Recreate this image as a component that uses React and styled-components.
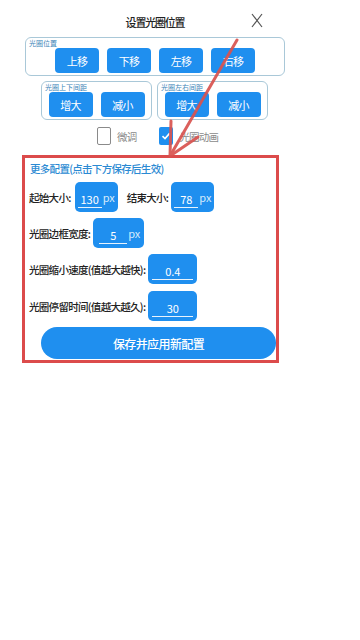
import React from "react";
import styled, { createGlobalStyle } from "styled-components";

const GlobalStyle = createGlobalStyle`
  html, body {
    margin: 0;
    padding: 0;
    background: #ffffff;
    font-family: "Noto Sans CJK SC", "Noto Sans", sans-serif;
  }
`;

const Page = styled.div`
  position: relative;
  width: 360px;
  height: 640px;
  overflow: hidden;
  background: #ffffff;
`;

const Panel = styled.div`
  width: 310px;
  display: flex;
  flex-direction: column;
`;

const Header = styled.div`
  height: 37px;
  display: grid;
  grid-template-columns: 1fr auto 1fr;
  align-items: center;
`;

const Title = styled.div`
  grid-column: 2;
  font-size: 11px;
  letter-spacing: -1.2px;
  color: #222;
  font-weight: 500;
  padding-top: 6px;
`;

const Close = styled.div`
  grid-column: 3;
  margin-left: 67px;
  width: 12px;
  height: 15px;
  margin-top: 3px;
  display: flex;
`;

const Group = styled.div`
  border: 1px solid #a9c8d8;
  border-radius: 6px;
  width: ${(p) => p.w}px;
  box-sizing: border-box;
  display: flex;
  flex-direction: column;
  padding-bottom: 2px;
`;

const GroupLabel = styled.div`
  font-size: 7px;
  line-height: 10px;
  height: 10px;
  color: #3d86b8;
  padding-left: 3px;
`;

const ButtonRow = styled.div`
  display: flex;
  justify-content: center;
  gap: 8px;
`;

const Btn = styled.div`
  width: 44px;
  height: 25px;
  border-radius: 4px;
  background: #1f8fef;
  color: #fff;
  font-size: 11px;
  letter-spacing: -0.8px;
  display: flex;
  align-items: center;
  justify-content: center;
`;

const Row1 = styled.div`
  padding-left: 25px;
`;

const Row2 = styled.div`
  display: flex;
  gap: 5px;
  padding-left: 41px;
  margin-top: 5px;
`;

const CheckRow = styled.div`
  display: flex;
  align-items: center;
  height: 18px;
  margin-top: 7px;
  padding-left: 97px;
`;

const CheckItem = styled.div`
  display: flex;
  align-items: center;
  gap: 6px;
  margin-right: ${(p) => p.mr || 0}px;
`;

const Box = styled.div`
  width: 14px;
  height: 18px;
  flex-shrink: 0;
  box-sizing: border-box;
  border-radius: 2px;
  border: ${(p) => (p.checked ? "none" : "1.5px solid #8a8a8a")};
  background: ${(p) => (p.checked ? "#1f8fef" : "#fff")};
  display: flex;
  align-items: center;
  justify-content: center;
`;

const CheckText = styled.span`
  font-size: 10.5px;
  letter-spacing: -0.8px;
  color: #8a8a8a;
`;

const RedBox = styled.div`
  margin-left: 22px;
  margin-top: 10px;
  width: 257px;
  height: 208px;
  box-sizing: border-box;
  border: 3px solid #dc4b4b;
  display: flex;
  flex-direction: column;
  padding: 4px 0 0 4px;
`;

const Heading = styled.div`
  font-size: 10.5px;
  letter-spacing: -0.7px;
  line-height: 14px;
  color: #2b8ad3;
  font-weight: 500;
  padding-left: 1px;
`;

const FormRow = styled.div`
  display: flex;
  align-items: center;
  height: 30px;
  margin-top: ${(p) => p.mt || 6}px;
`;

const Label = styled.span`
  font-size: 10.5px;
  letter-spacing: -0.7px;
  color: #222;
  font-weight: 500;
  margin-right: ${(p) => p.mr}px;
  white-space: nowrap;
`;

const Input = styled.div`
  width: ${(p) => p.w}px;
  height: 30px;
  flex-shrink: 0;
  border-radius: 5px;
  background: #1f8fef;
  display: flex;
  align-items: center;
  justify-content: ${(p) => (p.unit ? "flex-start" : "center")};
  padding-left: ${(p) => p.pl || 0}px;
  box-sizing: border-box;
  margin-right: ${(p) => p.mr || 0}px;
`;

const Value = styled.span`
  width: ${(p) => p.w}px;
  font-size: 11px;
  color: #fff;
  text-align: center;
  border-bottom: 1.5px solid #e8f3fd;
  line-height: 16px;
  margin-top: 4px;
`;

const Unit = styled.span`
  font-size: 11px;
  color: #d6ebfc;
  margin-left: 1px;
`;

const SaveBtn = styled.div`
  margin-top: 6px;
  margin-left: 12px;
  width: 235px;
  height: 32px;
  border-radius: 16px;
  background: #1f8fef;
  color: #fff;
  font-size: 12px;
  letter-spacing: -0.6px;
  font-weight: 500;
  display: flex;
  align-items: center;
  justify-content: center;
`;

const Arrow = styled.svg`
  position: absolute;
  left: 0;
  top: 0;
  pointer-events: none;
`;

export default function App() {
  return (
    <Page>
      <GlobalStyle />
      <Panel>
        <Header>
          <Title>设置光圈位置</Title>
          <Close>
            <svg width="12" height="15" viewBox="0 0 12 15">
              <path d="M1 1L11 14M11 1L1 14" stroke="#555" strokeWidth="1.2" fill="none" />
            </svg>
          </Close>
        </Header>

        <Row1>
          <Group w={260}>
            <GroupLabel>光圈位置</GroupLabel>
            <ButtonRow>
              <Btn>上移</Btn>
              <Btn>下移</Btn>
              <Btn>左移</Btn>
              <Btn>右移</Btn>
            </ButtonRow>
          </Group>
        </Row1>

        <Row2>
          <Group w={111}>
            <GroupLabel>光圈上下间距</GroupLabel>
            <ButtonRow>
              <Btn>增大</Btn>
              <Btn>减小</Btn>
            </ButtonRow>
          </Group>
          <Group w={111}>
            <GroupLabel>光圈左右间距</GroupLabel>
            <ButtonRow>
              <Btn>增大</Btn>
              <Btn>减小</Btn>
            </ButtonRow>
          </Group>
        </Row2>

        <CheckRow>
          <CheckItem mr={23}>
            <Box />
            <CheckText>微调</CheckText>
          </CheckItem>
          <CheckItem>
            <Box checked>
              <svg width="10" height="10" viewBox="0 0 10 10">
                <path d="M1.5 5.2L4 7.6L8.6 2.4" stroke="#fff" strokeWidth="1.6" fill="none" />
              </svg>
            </Box>
            <CheckText>光圈动画</CheckText>
          </CheckItem>
        </CheckRow>

        <RedBox>
          <Heading>更多配置(点击下方保存后生效)</Heading>
          <FormRow mt={6}>
            <Label mr={4}>起始大小:</Label>
            <Input w={43} unit pl={3} mr={9}>
              <Value w={24}>130</Value>
              <Unit>px</Unit>
            </Input>
            <Label mr={3}>结束大小:</Label>
            <Input w={43} unit pl={3}>
              <Value w={24}>78</Value>
              <Unit>px</Unit>
            </Input>
          </FormRow>
          <FormRow>
            <Label mr={3}>光圈边框宽度:</Label>
            <Input w={51} unit pl={6}>
              <Value w={28}>5</Value>
              <Unit>px</Unit>
            </Input>
          </FormRow>
          <FormRow>
            <Label mr={3}>光圈缩小速度(值越大越快):</Label>
            <Input w={49}>
              <Value w={41}>0.4</Value>
            </Input>
          </FormRow>
          <FormRow mt={7}>
            <Label mr={3}>光圈停留时间(值越大越久):</Label>
            <Input w={49}>
              <Value w={41}>30</Value>
            </Input>
          </FormRow>
          <SaveBtn>保存并应用新配置</SaveBtn>
        </RedBox>
      </Panel>

      <Arrow width="360" height="640" viewBox="0 0 360 640">
        <g stroke="#d9534f" strokeWidth="3" strokeLinecap="round" fill="none" opacity="0.92">
          <path d="M237 40L170 156" />
          <path d="M170 156L171 121" />
          <path d="M170 156L198 137" />
        </g>
      </Arrow>
    </Page>
  );
}
